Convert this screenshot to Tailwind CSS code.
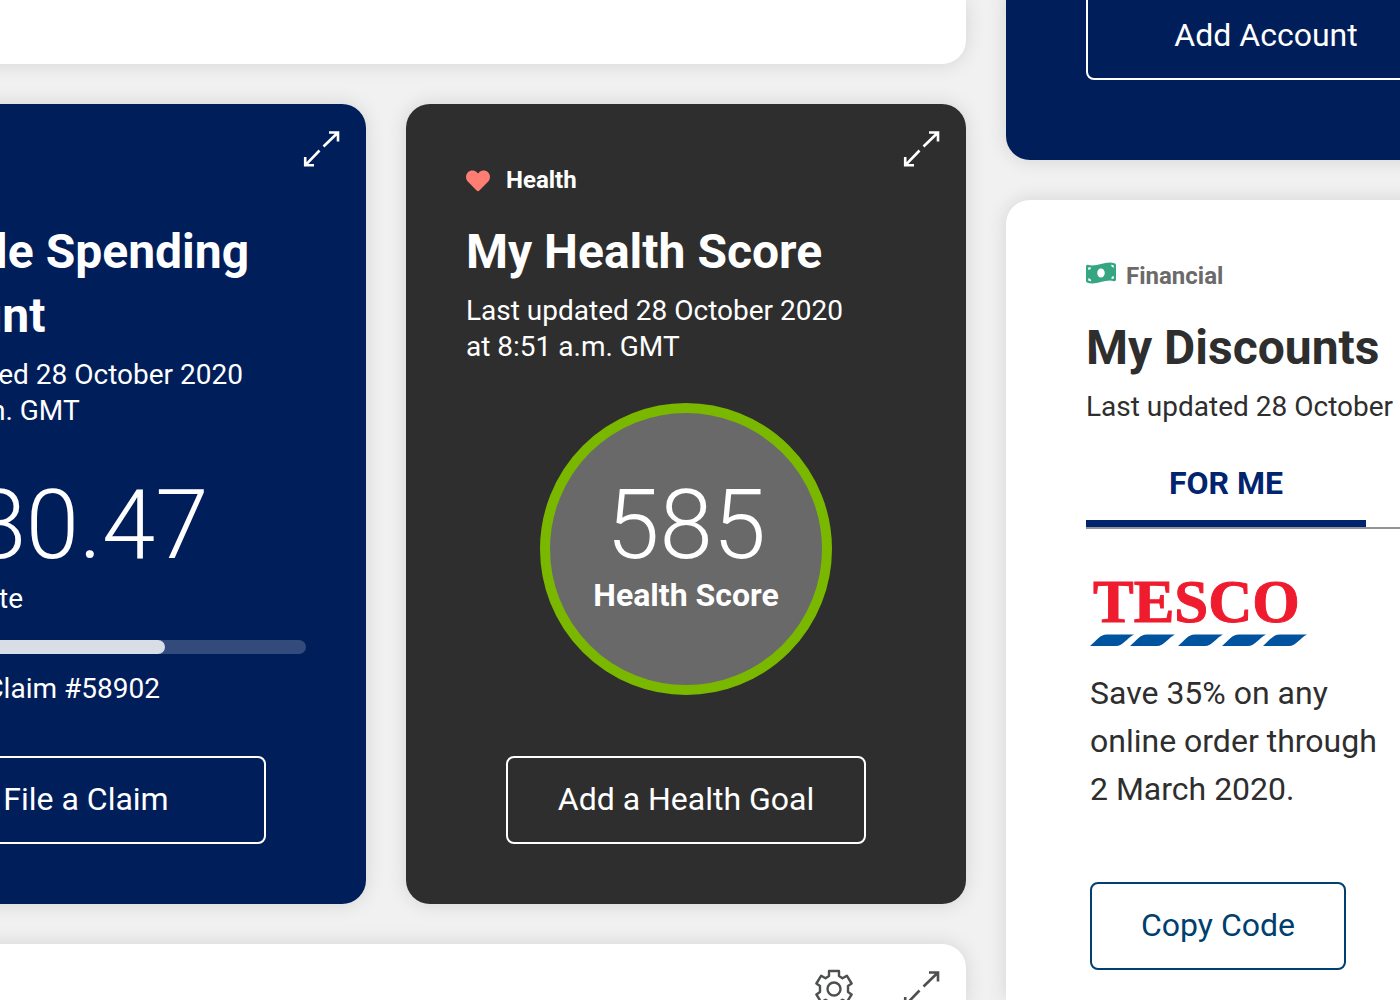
<!DOCTYPE html>
<html lang="en">
<head>
<meta charset="utf-8">
<meta name="viewport" content="width=device-width, initial-scale=1">
<title>My Dashboard</title>
<script src="https://cdn.jsdelivr.net/npm/@tailwindcss/browser@4"></script>
</head>
<body class="bg-[#f1f1f1] font-[Roboto,sans-serif] text-[#2e2e2e]">
<svg class="hidden" aria-hidden="true">
  <symbol id="expand" viewBox="0 0 40 40">
    <path d="M27 4.500H36V13.500M36 4.500L21.500 18.500M3.200 29V37.300H12M3.200 37.300L17.500 22.500" fill="none" stroke="currentColor" stroke-width="2.600"/>
  </symbol>
</svg>
<main class="flex h-screen gap-10 overflow-hidden">
  <div class="flex min-w-0 flex-1 flex-col gap-10">
    <section class="-ml-10 h-16 shrink-0 rounded-br-3xl bg-white shadow-[0_0_20px_rgba(0,0,0,0.12)]" aria-label="Overview"></section>

    <div class="flex shrink-0 justify-end gap-10">
      <section class="relative flex h-[800px] w-[560px] shrink-0 flex-col rounded-3xl bg-[#001e5a] px-15 pt-29 pb-15 text-white shadow-[0_0_20px_rgba(0,0,0,0.12)]">
        <button class="absolute top-6 right-6 size-10" aria-label="Expand spending account"><svg class="size-10"><use href="#expand"/></svg></button>
        <h2 class="text-[48px] leading-16 font-bold">Flexible Spending Account</h2>
        <p class="mt-[9px] text-[28px] leading-9">Last updated 28 October 2020<br>at 8:51 a.m. GMT</p>
        <p class="mt-10 text-[96px] leading-28 font-light whitespace-nowrap">$280.47</p>
        <p class="text-[28px] leading-9">Used to date</p>
        <div class="mt-[23px] h-3.5 shrink-0 overflow-hidden rounded-full bg-[#334b7b]" role="progressbar" aria-label="Used to date" aria-valuenow="68" aria-valuemin="0" aria-valuemax="100">
          <div class="h-full rounded-full bg-[#d9dde6]" style="width:68%"></div>
        </div>
        <p class="mt-[17px] text-[28px] leading-9">Received Claim #58902</p>
        <button class="mt-auto h-22 w-90 self-center rounded-lg border-2 border-white pb-0.5 text-[32px]">File a Claim</button>
      </section>

      <section class="relative flex h-[800px] w-[560px] shrink-0 flex-col rounded-3xl bg-[#2e2e2e] px-15 pt-14 pb-15 text-white shadow-[0_0_20px_rgba(0,0,0,0.12)]">
        <button class="absolute top-6 right-6 size-10" aria-label="Expand health score"><svg class="size-10"><use href="#expand"/></svg></button>
        <div class="flex h-10 items-center text-[24px] font-bold">
          <span class="w-10"><svg class="h-6 w-6 text-[#ff7d73]" viewBox="0 0 24 24" fill="currentColor"><path d="M12 23.200C11.500 23.200 11 22.900 10.600 22.500L2 13.800C-.6 11.200-.6 7 1.800 4.500C4.300 1.900 8.500 2 11 4.500L12 5.500L13 4.500C15.500 2 19.700 1.900 22.200 4.500C24.600 7 24.600 11.200 22 13.800L13.400 22.500C13 22.900 12.500 23.200 12 23.200Z"/></svg></span>Health
        </div>
        <h2 class="mt-5 text-[48px] leading-16 font-bold">My Health Score</h2>
        <p class="mt-[9px] text-[28px] leading-9">Last updated 28 October 2020<br>at 8:51 a.m. GMT</p>
        <div class="mt-[38px] flex size-73 shrink-0 flex-col items-center self-center rounded-full border-10 border-[#7ab800] bg-[#696969] pt-[58px]">
          <span class="text-[96px] leading-27 font-light">585</span>
          <span class="text-[32px] leading-8 font-bold">Health Score</span>
        </div>
        <button class="mt-auto h-22 w-90 self-center rounded-lg border-2 border-white pb-0.5 text-[32px]">Add a Health Goal</button>
      </section>
    </div>

    <section class="-ml-10 flex flex-1 items-start justify-end gap-12 rounded-tr-3xl bg-white px-6 pt-6 text-[#4d4f50] shadow-[0_0_20px_rgba(0,0,0,0.12)]" aria-label="Widget settings">
      <button class="size-10" aria-label="Settings"><svg class="size-10" viewBox="-20 -21 40 40" fill="none" stroke="currentColor" stroke-width="2.400" stroke-linejoin="round"><path d="M-5 -18H5V-13L8.500 -10.700L12.800 -13.300L17.600 -5.500L14 -3V3L17.600 5.500L12.800 13.300L8.500 10.700L5 13V18H-5V13L-8.500 10.700L-12.800 13.300L-17.600 5.500L-14 3V-3L-17.600 -5.500L-12.800 -13.300L-8.500 -10.700L-5 -13Z"/><circle r="6.500"/></svg></button>
      <button class="size-10" aria-label="Expand"><svg class="size-10"><use href="#expand"/></svg></button>
    </section>
  </div>

  <div class="-mt-2 flex w-[394px] shrink-0 flex-col gap-10">
    <section class="w-[520px] shrink-0 rounded-b-3xl bg-[#001e5a] px-20 pb-20 text-white shadow-[0_0_20px_rgba(0,0,0,0.12)]" aria-label="Accounts">
      <button class="block h-22 w-full rounded-lg border-2 border-white pb-0.5 text-[32px]">Add Account</button>
    </section>

    <section class="w-[720px] flex-1 rounded-tl-3xl bg-white px-20 pt-14 shadow-[0_0_20px_rgba(0,0,0,0.12)]">
      <div class="flex h-10 items-center text-[24px] font-bold text-[#6a6a6a]">
        <span class="w-10 pb-1.5"><svg class="h-6 w-[30px] text-[#35a582]" viewBox="0 0 640 512" fill="currentColor"><path d="M621.160 54.460C582.370 38.190 543.550 32 504.750 32c-123.170-.01-246.330 62.340-369.500 62.340-30.890 0-61.760-3.920-92.650-13.720-3.470-1.100-6.950-1.620-10.350-1.620C15.040 79 0 92.320 0 110.810v317.260c0 12.630 7.230 24.600 18.840 29.460C57.630 473.810 96.450 480 135.250 480c123.170 0 246.340-62.350 369.510-62.350 30.890 0 61.760 3.920 92.650 13.720 3.470 1.100 6.950 1.620 10.350 1.620 17.210 0 32.250-13.320 32.250-31.810V83.930c-.01-12.640-7.240-24.600-18.850-29.470zM48 132.220c20.120 5.040 41.120 7.570 62.720 8.930C104.840 170.540 79 192.690 48 192.690v-60.470zm0 285v-47.780c34.370 0 62.180 27.270 63.710 61.400-22.530-1.810-43.590-6.310-63.710-13.620zM320 352c-44.190 0-80-42.990-80-96 0-53.020 35.820-96 80-96s80 42.980 80 96c0 53.030-35.830 96-80 96zm272 27.780c-17.520-4.390-35.710-6.850-54.320-8.440 5.870-26.080 27.500-45.880 54.320-49.280v57.720zm0-236.110c-30.890-3.910-54.860-29.700-55.810-61.550 19.540 2.170 38.090 6.230 55.810 12.660v48.890z"/></svg></span>Financial
      </div>
      <h2 class="mt-5 text-[48px] leading-16 font-bold">My Discounts</h2>
      <p class="mt-[9px] text-[28px] leading-9">Last updated 28 October 2020</p>
      <div class="mt-5 flex border-b-2 border-[#929394] text-[32px] font-bold text-[#00246e]" role="tablist">
        <button class="h-20.5 w-70 border-b-7 border-[#00246e]" role="tab" aria-selected="true">FOR ME</button>
        <button class="h-20.5 w-70 text-[#6a6a6a]" role="tab" aria-selected="false">ALL</button>
      </div>
      <div class="px-1 pt-12">
        <svg class="h-18 w-[220px]" viewBox="0 0 220 72" role="img" aria-label="Tesco">
          <text x="3" y="45" font-family="Liberation Serif, serif" font-weight="700" font-size="61" fill="#ee1c2e" stroke="#ee1c2e" stroke-width="1">TESCO</text>
          <path d="M0 69C7 63 10 57.500 17 57.500H44C37 61 33 69 26 69ZM40 69C47 63 50 57.500 57 57.500H85C78 61 74 69 67 69ZM88 69C95 63 98 57.500 105 57.500H133C126 61 122 69 115 69ZM132 69C139 63 142 57.500 149 57.500H176C169 61 165 69 158 69ZM173 69C180 63 183 57.500 190 57.500H217C210 61 206 69 199 69Z" fill="#00539f"/>
        </svg>
        <p class="mt-5 w-75 text-[32px] leading-12">Save 35% on any online order through 2&nbsp;March 2020.</p>
        <button class="mt-[69px] h-22 w-64 rounded-lg border-2 border-[#003f6e] pb-0.5 text-[32px] text-[#003f6e]">Copy Code</button>
      </div>
    </section>
  </div>
</main>
</body>
</html>
